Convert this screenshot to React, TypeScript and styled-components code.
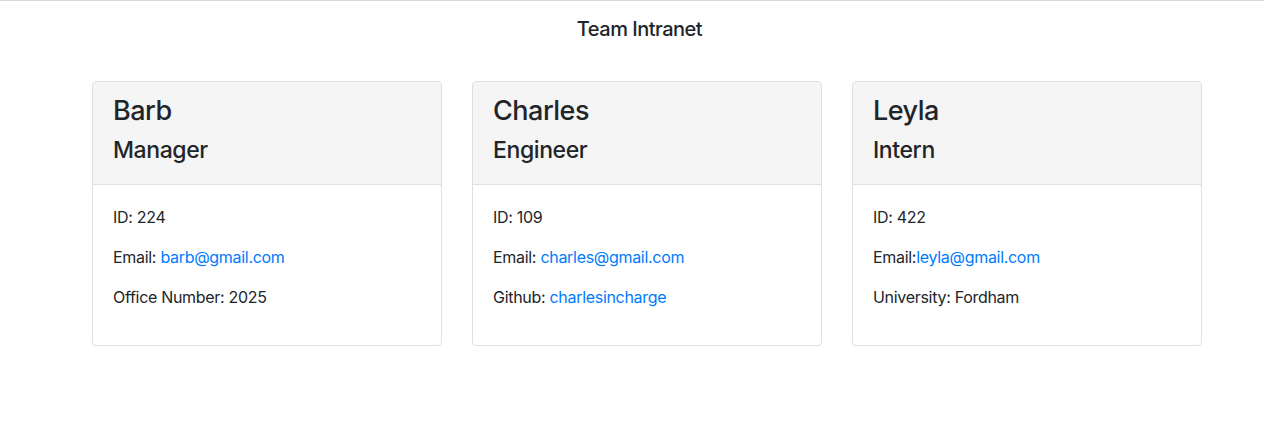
import React from "react";
import styled, { createGlobalStyle } from "styled-components";

const GlobalStyle = createGlobalStyle`
  html, body { margin: 0; padding: 0; background: #fff; }
  body {
    font-family: Inter, "Liberation Sans", Arial, sans-serif;
    color: #212529;
    font-size: 16px;
    line-height: 1.5;
  }
`;

const Page = styled.div`
  border-top: 1px solid #d9d9d9;
  min-height: 435px;
`;

const Title = styled.h5`
  margin: 0;
  padding: 16px 0 0 15px;
  text-align: center;
  font-size: 20px;
  line-height: 24px;
  font-weight: 500;
  letter-spacing: -0.5px;
  color: #212529;
`;

const CardRow = styled.div`
  display: flex;
  gap: 30px;
  padding-left: 92px;
  margin-top: 40px;
`;

const Card = styled.div`
  width: 350px;
  box-sizing: border-box;
  border: 1px solid #dfdfdf;
  border-radius: 4px;
  overflow: hidden;
  background: #fff;
`;

const CardHeader = styled.div`
  background: #f5f5f5;
  padding: 12px 20px;
  border-bottom: 1px solid #dfdfdf;
`;

const Name = styled.h3`
  margin: 0 0 8px;
  font-size: 27px;
  line-height: 33.6px;
  font-weight: 500;
  letter-spacing: -0.5px;
`;

const Role = styled.h4`
  margin: 0 0 8px;
  font-size: 23px;
  line-height: 28.8px;
  font-weight: 500;
  letter-spacing: -0.4px;
`;

const CardBody = styled.div`
  padding: 20px;
`;

const Line = styled.p`
  margin: 0 0 16px;
  font-size: 16px;
  line-height: 24px;
  letter-spacing: -0.3px;
`;

const Link = styled.a`
  color: #007bff;
  text-decoration: none;
`;

type Item = { label: string; value: string; link?: boolean; sep?: string };
type Member = { name: string; role: string; items: Item[] };

const members: Member[] = [
  {
    name: "Barb",
    role: "Manager",
    items: [
      { label: "ID:", value: "224" },
      { label: "Email:", value: "barb@gmail.com", link: true },
      { label: "Office Number:", value: "2025" },
    ],
  },
  {
    name: "Charles",
    role: "Engineer",
    items: [
      { label: "ID:", value: "109" },
      { label: "Email:", value: "charles@gmail.com", link: true },
      { label: "Github:", value: "charlesincharge", link: true },
    ],
  },
  {
    name: "Leyla",
    role: "Intern",
    items: [
      { label: "ID:", value: "422" },
      { label: "Email:", value: "leyla@gmail.com", link: true, sep: "" },
      { label: "University:", value: "Fordham" },
    ],
  },
];

export default function App() {
  return (
    <>
      <GlobalStyle />
      <Page>
        <Title>Team Intranet</Title>
        <CardRow>
          {members.map((m) => (
            <Card key={m.name}>
              <CardHeader>
                <Name>{m.name}</Name>
                <Role>{m.role}</Role>
              </CardHeader>
              <CardBody>
                {m.items.map((it) => (
                  <Line key={it.label}>
                    {it.label}
                    {it.sep ?? " "}
                    {it.link ? <Link href="#">{it.value}</Link> : it.value}
                  </Line>
                ))}
              </CardBody>
            </Card>
          ))}
        </CardRow>
      </Page>
    </>
  );
}
